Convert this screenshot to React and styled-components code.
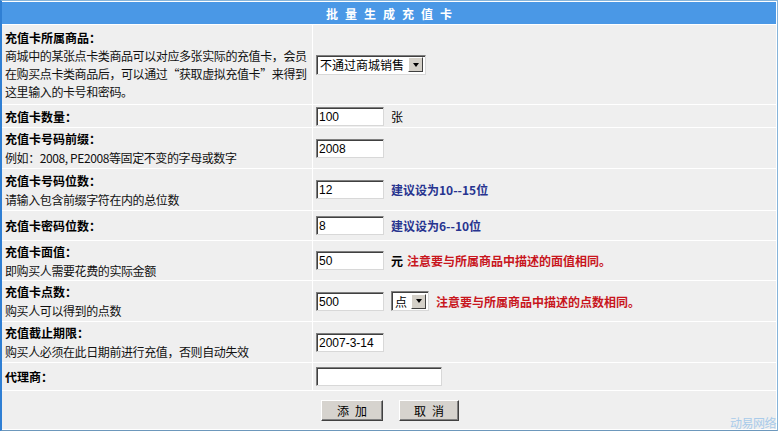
import React from "react"
import styled, { createGlobalStyle } from "styled-components"

const GlobalStyle = createGlobalStyle`
  html, body {
    margin: 0;
    padding: 0;
    background: #ffffff;
  }
  body {
    font-family: "Noto Sans CJK SC", "DejaVu Sans", sans-serif;
    font-size: 12px;
    color: #000;
  }
`

const Frame = styled.div`
  position: relative;
  box-sizing: border-box;
  width: 778px;
  display: grid;
  grid-template-columns: 310px 1fr;
  gap: 1px;
  padding: 1px 1px 1px 0;
  background: #ffffff;
  border: 1px solid #86b4da;
  border-left: 2px solid #2f7fd4;
  border-bottom-color: #6d98bc;
`

const Header = styled.div`
  grid-column: 1 / -1;
  height: 22px;
  background: #4a98e6;
  color: #ffffff;
  font-weight: bold;
  font-size: 12px;
  letter-spacing: 7px;
  padding-left: 7px;
  display: flex;
  align-items: center;
  justify-content: center;
`

const Label = styled.div`
  box-sizing: border-box;
  height: ${(p) => p.$h}px;
  background: #efefef;
  padding: 0 0 0 3px;
  display: flex;
  flex-direction: column;
  justify-content: center;
  line-height: ${(p) => (p.$tight ? 18 : 19)}px;
  white-space: nowrap;
`

const Title = styled.b`
  font-weight: bold;
`

const Desc = styled.span`
  color: #111;
  letter-spacing: -0.4px;
`

const Field = styled.div`
  background: #efefef;
  display: flex;
  align-items: center;
  gap: 7px;
  padding-left: 3px;
  white-space: nowrap;
`

const TextBox = styled.input`
  box-sizing: border-box;
  width: ${(p) => p.$w || 68}px;
  height: 19px;
  margin: 0;
  padding: 1px 2px 0;
  background: #ffffff;
  border: 1px solid;
  border-color: #7f7f7f #d8d8d8 #d8d8d8 #7f7f7f;
  box-shadow: inset 1px 1px 0 #404040;
  font-family: "Liberation Sans", "DejaVu Sans", sans-serif;
  font-size: 12px;
  color: #000;
  outline: none;
`

const Select = styled.div`
  box-sizing: border-box;
  display: flex;
  align-items: center;
  height: 20px;
  background: #ffffff;
  border: 1px solid;
  border-color: #7f7f7f #d8d8d8 #d8d8d8 #7f7f7f;
  box-shadow: inset 1px 1px 0 #404040;
  padding: 2px 2px 2px 3px;
  font-size: 12px;
`

const SelectText = styled.span`
  padding-right: 4px;
`

const Arrow = styled.span`
  box-sizing: border-box;
  width: 15px;
  height: 15px;
  background: #d4d0c8;
  border: 1px solid;
  border-color: #ffffff #404040 #404040 #ffffff;
  display: flex;
  align-items: center;
  justify-content: center;

  &::after {
    content: "";
    border-left: 3.5px solid transparent;
    border-right: 3.5px solid transparent;
    border-top: 4px solid #000;
  }
`

const Hint = styled.span`
  color: ${(p) => (p.$red ? "#c8161d" : "#27348f")};
  font-weight: 600;
  margin-left: ${(p) => p.$shift || 0}px;
`

const Unit = styled.span`
  font-weight: ${(p) => (p.$bold ? "bold" : "normal")};
`

const Buttons = styled.div`
  grid-column: 1 / -1;
  height: 38px;
  background: #efefef;
  display: flex;
  align-items: center;
  justify-content: center;
  gap: 16px;
  padding-left: 2px;
`

const Button = styled.button`
  box-sizing: border-box;
  width: ${(p) => p.$w}px;
  height: 21px;
  margin: 0;
  padding: 0 0 0 6px;
  background: #d6d3ce;
  border: 1px solid;
  border-color: #ffffff #404040 #404040 #ffffff;
  box-shadow: inset -1px -1px 0 #808080;
  font-family: "Noto Sans CJK SC", sans-serif;
  font-size: 12px;
  letter-spacing: 6px;
  color: #000;
`

const Mark = styled.span`
  position: absolute;
  right: 1px;
  bottom: -1px;
  color: #a9cbea;
  font-size: 12px;
  letter-spacing: -0.5px;
`

export default function App() {
  return (
    <>
      <GlobalStyle />
      <Frame>
        <Header>批量生成充值卡</Header>

        <Label $h={79} $tight>
          <Title>充值卡所属商品：</Title>
          <Desc>商城中的某张点卡类商品可以对应多张实际的充值卡，会员</Desc>
          <Desc>在购买点卡类商品后，可以通过“获取虚拟充值卡”来得到</Desc>
          <Desc>这里输入的卡号和密码。</Desc>
        </Label>
        <Field>
          <Select>
            <SelectText>不通过商城销售</SelectText>
            <Arrow />
          </Select>
        </Field>

        <Label $h={22}>
          <Title>充值卡数量：</Title>
        </Label>
        <Field>
          <TextBox defaultValue="100" />
          <Unit>张</Unit>
        </Field>

        <Label $h={40}>
          <Title>充值卡号码前缀：</Title>
          <Desc>例如：2008, PE2008等固定不变的字母或数字</Desc>
        </Label>
        <Field>
          <TextBox defaultValue="2008" />
        </Field>

        <Label $h={41}>
          <Title>充值卡号码位数：</Title>
          <Desc>请输入包含前缀字符在内的总位数</Desc>
        </Label>
        <Field>
          <TextBox defaultValue="12" />
          <Hint>建议设为10--15位</Hint>
        </Field>

        <Label $h={29}>
          <Title>充值卡密码位数：</Title>
        </Label>
        <Field>
          <TextBox defaultValue="8" />
          <Hint>建议设为6--10位</Hint>
        </Field>

        <Label $h={39}>
          <Title>充值卡面值：</Title>
          <Desc>即购买人需要花费的实际金额</Desc>
        </Label>
        <Field>
          <TextBox defaultValue="50" />
          <Unit $bold>元</Unit>
          <Hint $red $shift={-3}>注意要与所属商品中描述的面值相同。</Hint>
        </Field>

        <Label $h={40}>
          <Title>充值卡点数：</Title>
          <Desc>购买人可以得到的点数</Desc>
        </Label>
        <Field>
          <TextBox defaultValue="500" />
          <Select>
            <SelectText>点</SelectText>
            <Arrow />
          </Select>
          <Hint $red>注意要与所属商品中描述的点数相同。</Hint>
        </Field>

        <Label $h={40}>
          <Title>充值截止期限：</Title>
          <Desc>购买人必须在此日期前进行充值，否则自动失效</Desc>
        </Label>
        <Field>
          <TextBox defaultValue="2007-3-14" />
        </Field>

        <Label $h={27}>
          <Title>代理商：</Title>
        </Label>
        <Field>
          <TextBox $w={126} defaultValue="" />
        </Field>

        <Buttons>
          <Button $w={62}>添加</Button>
          <Button $w={60}>取消</Button>
        </Buttons>

        <Mark>动易网络</Mark>
      </Frame>
    </>
  )
}
